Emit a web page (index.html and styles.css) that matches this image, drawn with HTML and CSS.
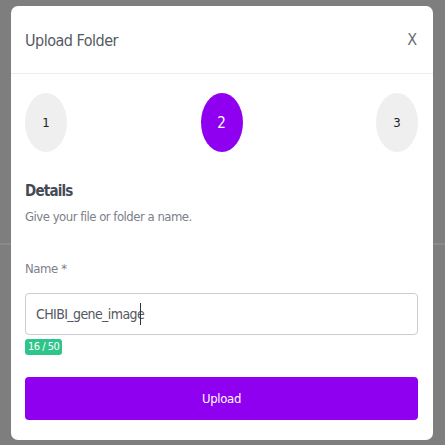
FILE: index.html
```html
<!DOCTYPE html>
<html lang="en">
    <head>
        <meta charset="UTF-8" />
        <title>Upload Folder</title>
        <link rel="stylesheet" href="styles.css">
    </head>

    <body>
        <div class="modal">
            <header class="modal_head">
                <h2 class="modal_title">Upload Folder</h2>
                <button class="btn_close" type="button">X</button>
            </header>
            <div class="modal_body">
                <ol class="steps">
                    <li class="step">1</li>
                    <li class="step on">2</li>
                    <li class="step">3</li>
                </ol>
                <h3 class="sec_title">Details</h3>
                <p class="sec_desc">Give your file or folder a name.</p>
                <label class="field_label" for="folderName">Name *</label>
                <div class="field">
                    <input id="folderName" class="field_input" type="text" value="CHIBI_gene_image">
                    <span class="caret"></span>
                </div>
                <span class="count">16 / 50</span>
                <button class="btn_upload" type="button">Upload</button>
            </div>
        </div>
    </body>
</html>
```

FILE: styles.css
```css
* {
    box-sizing: border-box;
    padding: 0;
    margin: 0;
}
body {
    height: 445px;
    padding: 6px 12px 5px 11px;
    background-color: #7e7e7e;
    background-image: linear-gradient(to bottom, transparent 243px, #8a8a8a 243px, #8a8a8a 245px, transparent 245px);
    font-family: "DejaVu Sans Condensed", "Liberation Sans", sans-serif;
}
.modal {
    height: 434px;
    background-color: #fff;
    border-radius: 7px;
    overflow: hidden;
}
.modal_head {
    height: 68px;
    display: flex;
    align-items: center;
    justify-content: space-between;
    padding: 0 16px 0 14px;
    border-bottom: 1px solid #ececec;
}
.modal_title {
    font-size: 16px;
    letter-spacing: -0.5px;
    font-weight: normal;
    color: #555a63;
    padding-top: 2px;
}
.btn_close {
    border: 0;
    background: none;
    font-family: inherit;
    font-size: 16px;
    color: #6a6e74;
    cursor: pointer;
}
.modal_body {
    padding: 19px 15px 0 14px;
    display: flex;
    flex-direction: column;
    align-items: flex-start;
}
.steps {
    list-style: none;
    align-self: stretch;
    display: flex;
    justify-content: space-between;
}
.step {
    width: 42px;
    height: 59px;
    border-radius: 50%;
    background-color: #efefef;
    color: #222;
    font-size: 13px;
    display: flex;
    justify-content: center;
    align-items: center;
}
.step.on {
    background-color: #8f00f0;
    color: #fff;
    font-size: 15px;
}
.sec_title {
    margin-top: 30px;
    font-size: 15px;
    letter-spacing: -0.8px;
    color: #454b56;
}
.sec_desc {
    margin-top: 9px;
    font-size: 13px;
    letter-spacing: -0.5px;
    color: #7c808b;
}
.field_label {
    margin-top: 37px;
    font-size: 13px;
    letter-spacing: -0.4px;
    color: #7c808b;
}
.field {
    position: relative;
    align-self: stretch;
    margin-top: 17px;
}
.field_input {
    width: 100%;
    height: 42px;
    padding: 0 10px;
    border: 1px solid #c9cdd3;
    border-radius: 4px;
    font-family: inherit;
    font-size: 14px;
    letter-spacing: -0.6px;
    color: #545861;
    outline: none;
}
.caret {
    position: absolute;
    left: 115px;
    top: 10px;
    width: 1px;
    height: 22px;
    background-color: #333;
}
.count {
    margin-top: 4px;
    padding: 2px 3px;
    line-height: 12px;
    border-radius: 3px;
    background-color: #2ec58b;
    color: #fff;
    font-size: 11px;
    letter-spacing: -0.5px;
}
.btn_upload {
    align-self: stretch;
    margin-top: 22px;
    height: 43px;
    border: 0;
    border-radius: 4px;
    background-color: #8f00f0;
    color: #fff;
    font-family: inherit;
    font-size: 13px;
    letter-spacing: -0.3px;
    cursor: pointer;
}
```
